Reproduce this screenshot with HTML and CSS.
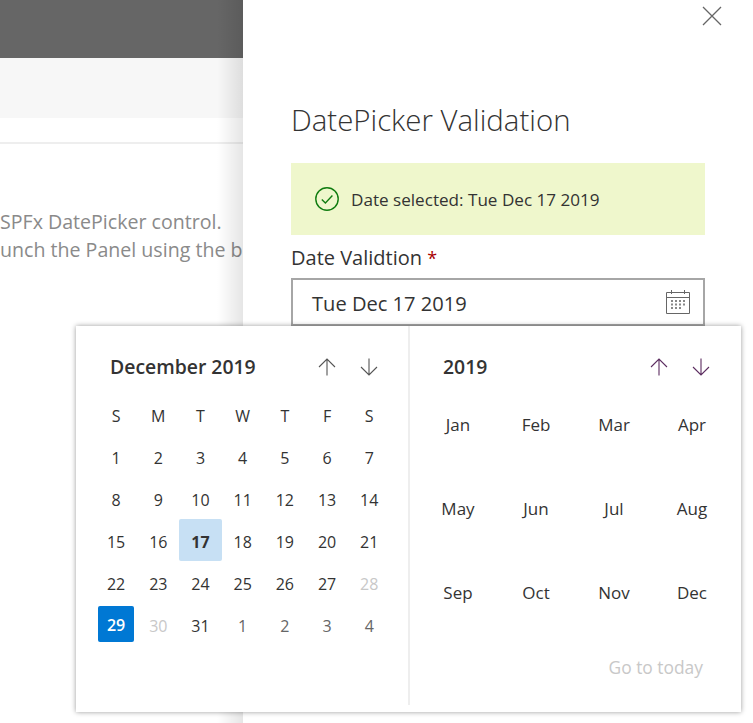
FILE: index.html
```html
<!DOCTYPE html>
<html lang="en">
<head>
    <meta charset="UTF-8">
    <meta name="viewport" content="width=device-width, initial-scale=1.0">
    <title>DatePicker Validation</title>
    <link rel="stylesheet" href="styles.css">
</head>
<body>
    <div class="page">
        <div class="page-main">
            <div class="suite-bar"></div>
            <div class="command-bar"></div>
            <div class="page-content">
                <p>SPFx DatePicker control.</p>
                <p>unch the Panel using the b</p>
            </div>
        </div>

        <div class="panel">
            <div class="panel-top">
                <button class="close-button" aria-label="Close">
                    <svg width="20" height="20" viewBox="0 0 20 20"><path d="M1 1L19 19M19 1L1 19" /></svg>
                </button>
            </div>
            <h1 class="panel-title">DatePicker Validation</h1>
            <div class="message-bar">
                <svg width="24" height="24" viewBox="0 0 24 24"><circle cx="12" cy="12" r="11.2" /><path d="M6.8 12.4L10.4 16L17.4 8.6" /></svg>
                <span>Date selected: Tue Dec 17 2019</span>
            </div>
            <label class="field-label">Date Validtion <span class="required">*</span></label>
            <div class="date-field">
                <span>Tue Dec 17 2019</span>
                <svg class="calendar-icon" width="24" height="24" viewBox="0 0 24 24">
                    <path d="M0.5 2.5H23.5V23.5H0.5ZM0.5 7.5H23.5M5.5 0V4M18.5 0V4" />
                    <path class="calendar-dots" d="M5 11h2M9 11h2M13 11h2M17 11h2M5 14.5h2M9 14.5h2M13 14.5h2M17 14.5h2M5 18h2M9 18h2M13 18h2" />
                </svg>
            </div>
        </div>
    </div>

    <div class="callout">
        <div class="day-picker">
            <div class="picker-header">
                <div class="picker-title">December 2019</div>
                <div class="picker-arrows">
                    <svg width="18" height="18" viewBox="0 0 18 18"><path d="M9 17.5V1M1 9L9 1L17 9" /></svg>
                    <svg width="18" height="18" viewBox="0 0 18 18"><path d="M9 0.5V17M1 9L9 17L17 9" /></svg>
                </div>
            </div>
            <div class="day-grid">
                <div>S</div><div>M</div><div>T</div><div>W</div><div>T</div><div>F</div><div>S</div>
                <div>1</div><div>2</div><div>3</div><div>4</div><div>5</div><div>6</div><div>7</div>
                <div>8</div><div>9</div><div>10</div><div>11</div><div>12</div><div>13</div><div>14</div>
                <div>15</div><div>16</div><div class="day-selected">17</div><div>18</div><div>19</div><div>20</div><div>21</div>
                <div>22</div><div>23</div><div>24</div><div>25</div><div>26</div><div>27</div><div class="day-disabled">28</div>
                <div><span class="day-today">29</span></div><div class="day-disabled">30</div><div>31</div><div class="day-outside">1</div><div class="day-outside">2</div><div class="day-outside">3</div><div class="day-outside">4</div>
            </div>
        </div>
        <div class="month-picker">
            <div class="picker-header">
                <div class="picker-title">2019</div>
                <div class="picker-arrows month-arrows">
                    <svg width="18" height="18" viewBox="0 0 18 18"><path d="M9 17.5V1M1 9L9 1L17 9" /></svg>
                    <svg width="18" height="18" viewBox="0 0 18 18"><path d="M9 0.5V17M1 9L9 17L17 9" /></svg>
                </div>
            </div>
            <div class="month-grid">
                <div>Jan</div><div>Feb</div><div>Mar</div><div>Apr</div>
                <div>May</div><div>Jun</div><div>Jul</div><div>Aug</div>
                <div>Sep</div><div>Oct</div><div>Nov</div><div>Dec</div>
            </div>
            <div class="go-today">Go to today</div>
        </div>
    </div>
</body>
</html>
```

FILE: styles.css
```css
html, body {
    margin: 0;
    height: 100%;
    overflow: hidden;
}

body {
    font-family: 'Open Sans', sans-serif;
    background: #fff;
    color: #333;
    position: relative;
}

.page {
    display: flex;
    height: 723px;
}

.page-main {
    width: 243px;
    flex-shrink: 0;
    overflow: hidden;
    position: relative;
}

.page-main::after {
    content: '';
    position: absolute;
    top: 0;
    right: 0;
    bottom: 0;
    width: 26px;
    background: linear-gradient(90deg, rgba(0, 0, 0, 0), rgba(0, 0, 0, 0.1));
}

.suite-bar {
    height: 58px;
    background: #666;
}

.command-bar {
    height: 60px;
    background: #f7f7f7;
}

.page-content {
    margin-top: 24px;
    padding-top: 64px;
    border-top: 2px solid #eee;
    font-size: 19.6px;
    line-height: 28px;
    color: #8a8a8a;
    white-space: nowrap;
}

.page-content p {
    margin: 0;
}

.panel {
    flex: 1;
    padding: 0 48px;
    background: #fff;
}

.panel-top {
    display: flex;
    justify-content: flex-end;
    height: 98px;
}

.close-button {
    background: none;
    border: none;
    padding: 0;
    margin: 6px -17px 0 0;
    width: 20px;
    height: 20px;
}

.close-button svg {
    display: block;
    fill: none;
    stroke: #666;
    stroke-width: 1.3;
}

.panel-title {
    margin: 0 0 9px;
    font-size: 29.4px;
    font-weight: 300;
    line-height: 44px;
    height: 56px;
    color: #333;
}

.message-bar {
    display: flex;
    align-items: center;
    gap: 12px;
    height: 72px;
    padding-left: 24px;
    background: #eff7cc;
    font-size: 17.1px;
}

.message-bar svg {
    fill: none;
    stroke: #107c10;
    stroke-width: 1.4;
}

.field-label {
    display: block;
    margin-top: 9px;
    height: 34px;
    line-height: 28px;
    font-size: 20px;
}

.required {
    color: #a80000;
    font-size: 18px;
}

.date-field {
    display: flex;
    align-items: center;
    justify-content: space-between;
    box-sizing: border-box;
    height: 48px;
    padding: 0 13px 0 19px;
    border: 2px solid #a6a6a6;
    font-size: 20.1px;
}

.date-field span {
    padding-top: 2px;
}

.calendar-icon {
    fill: none;
    stroke: #666;
    stroke-width: 1;
}

.calendar-dots {
    stroke-width: 2;
    stroke: #888;
}

/* Calendar popup */
.callout {
    position: absolute;
    left: 76px;
    top: 326px;
    width: 665px;
    height: 386px;
    display: flex;
    background: #fff;
    box-shadow: 0 0 5px rgba(0, 0, 0, 0.4);
}

.day-picker {
    width: 334px;
    height: 379px;
    flex-shrink: 0;
    box-sizing: border-box;
    padding: 0 19px;
    border-right: 2px solid #eee;
}

.month-picker {
    flex: 1;
    min-width: 0;
    padding: 0 31px 0 18px;
}

.picker-header {
    display: flex;
    justify-content: space-between;
    align-items: center;
    height: 81px;
    padding-left: 15px;
}

.picker-title {
    font-size: 19.4px;
    font-weight: 600;
}

.picker-arrows {
    display: flex;
    gap: 24px;
    padding-right: 11px;
}

.month-arrows {
    padding-right: 0;
}

.picker-arrows svg {
    display: block;
    fill: none;
    stroke: #555;
    stroke-width: 1.1;
}

.month-arrows svg {
    stroke: #5c2d60;
}

.day-grid {
    display: grid;
    grid-template-columns: repeat(7, 42.2px);
    grid-auto-rows: 42px;
    margin-top: -14px;
    font-size: 16px;
}

.day-grid > div {
    display: flex;
    align-items: center;
    justify-content: center;
    box-sizing: border-box;
    padding-top: 4px;
}

.day-selected {
    background: #c7e0f4;
    border-radius: 2px;
    font-weight: 700;
}

.day-disabled {
    color: #c8c8c8;
}

.day-outside {
    color: #666;
}

.day-today {
    display: flex;
    align-items: center;
    justify-content: center;
    box-sizing: border-box;
    width: 36px;
    height: 36px;
    margin-top: -4px;
    padding-top: 2px;
    background: #0078d4;
    color: #fff;
    border-radius: 2px;
    font-weight: 600;
}

.month-grid {
    display: grid;
    grid-template-columns: repeat(4, 78px);
    grid-auto-rows: 84px;
    margin-top: -25px;
    margin-left: -9px;
    font-size: 17px;
}

.month-grid > div {
    display: flex;
    align-items: center;
    justify-content: center;
}

.go-today {
    position: absolute;
    right: 38px;
    top: 329px;
    font-size: 17.4px;
    color: #c8c8c8;
}
```
